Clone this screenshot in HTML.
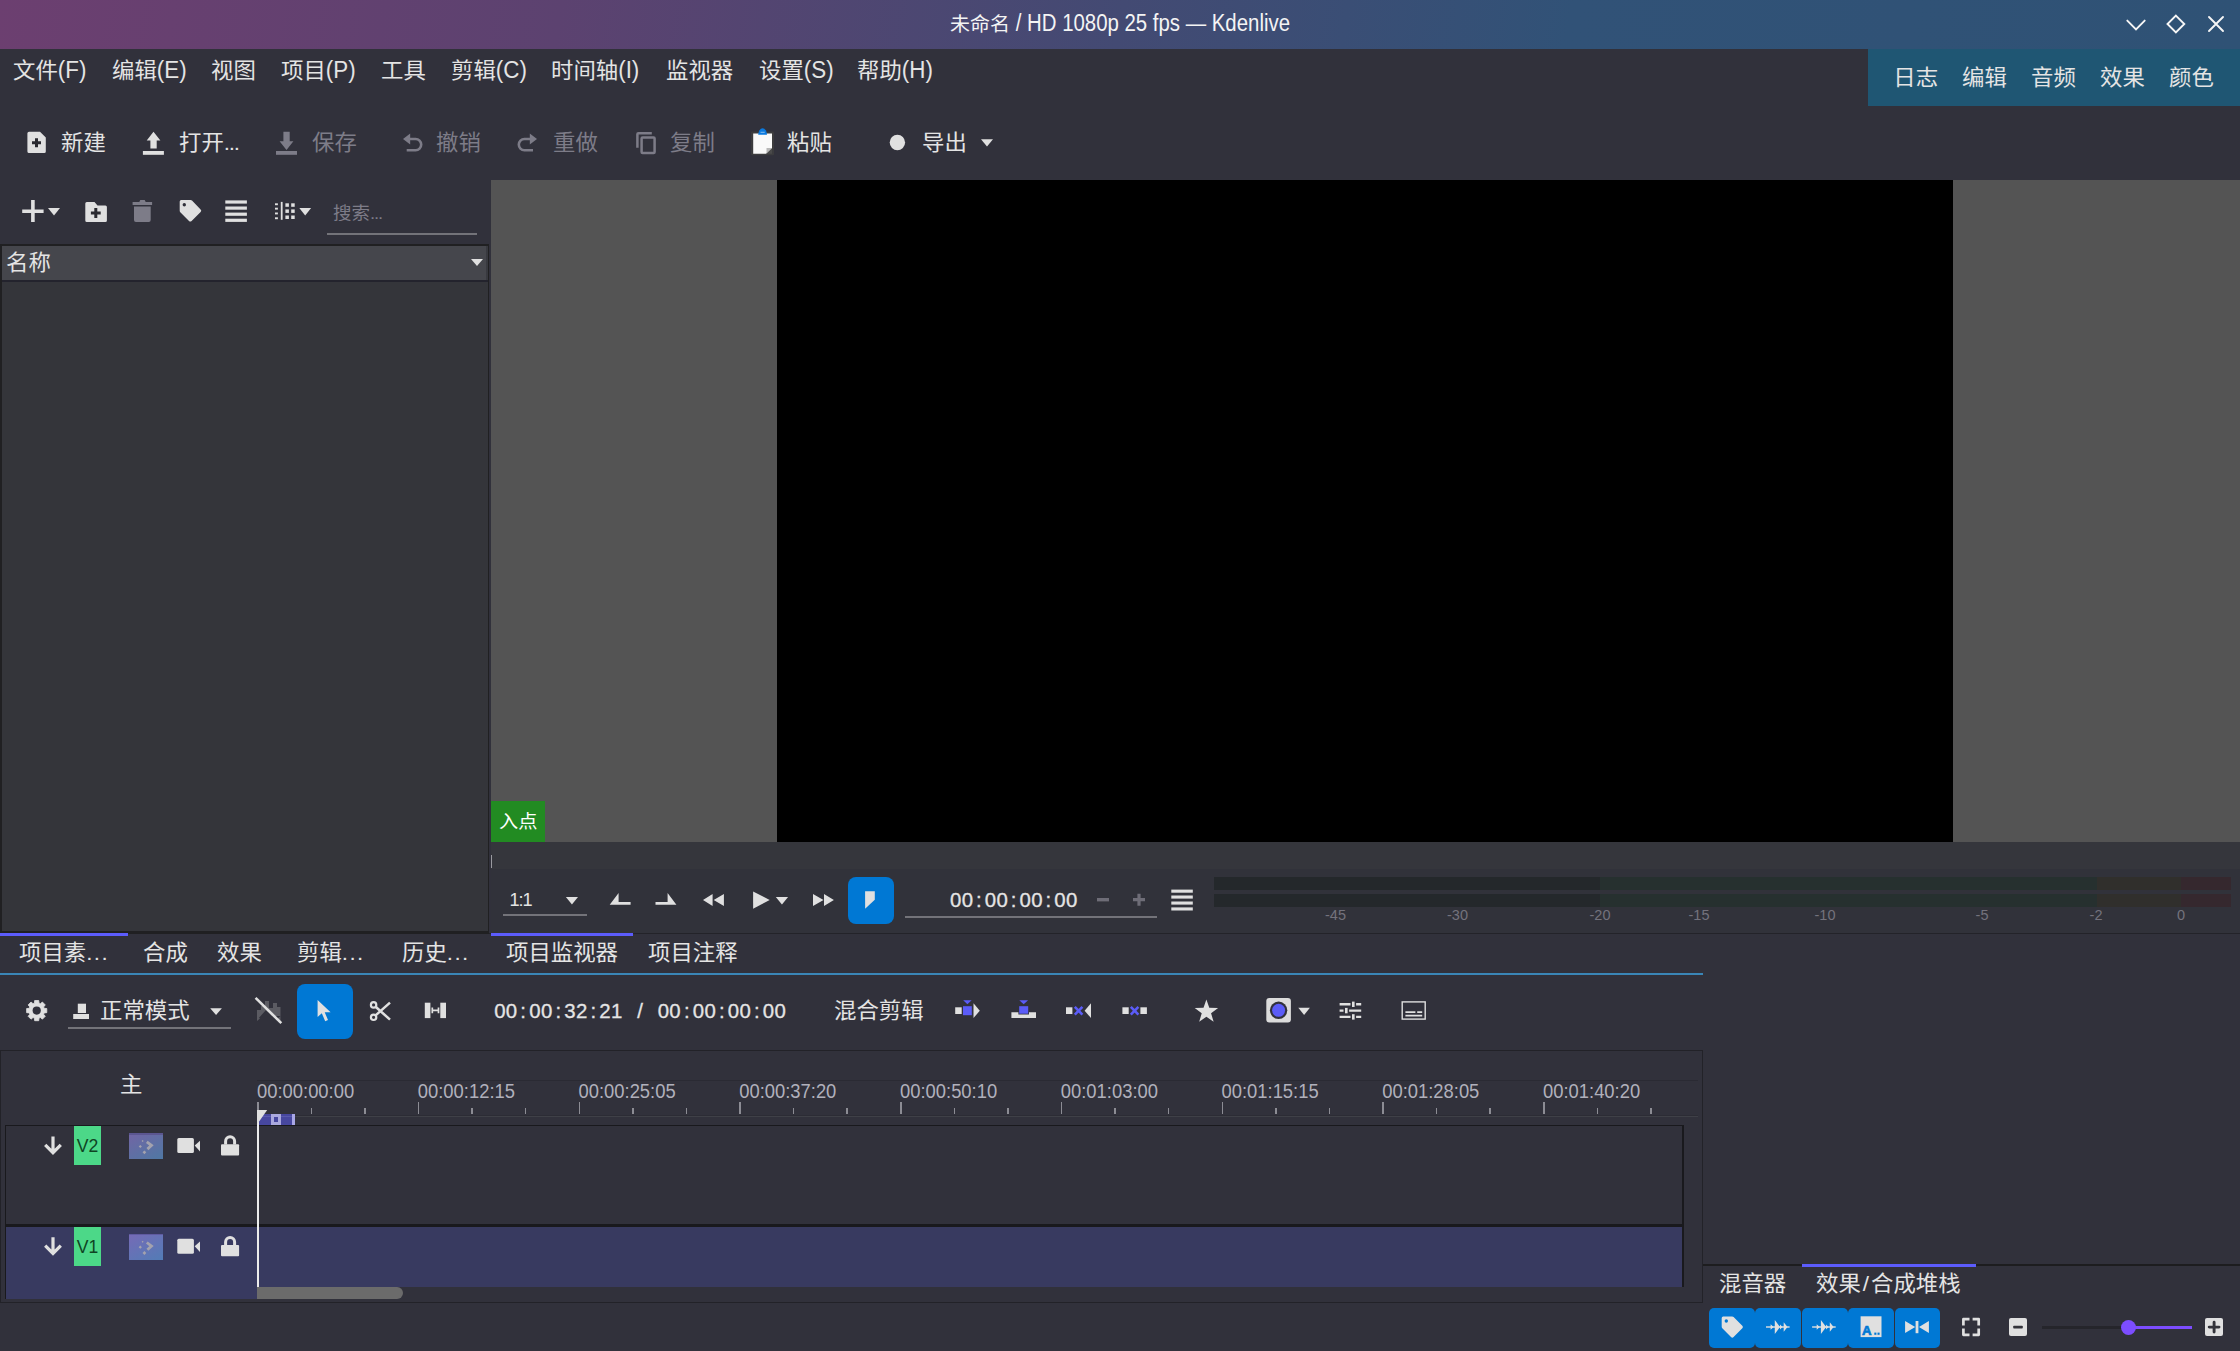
<!DOCTYPE html>
<html lang="zh-CN">
<head>
<meta charset="utf-8">
<title>未命名 / HD 1080p 25 fps — Kdenlive</title>
<style>
*{box-sizing:border-box;margin:0;padding:0}
html,body{width:2240px;height:1351px;overflow:hidden;background:#31313b}
body{position:relative;font-family:"Liberation Sans","Noto Sans CJK SC",sans-serif;font-size:22.4px;color:#e4e4e4;line-height:1}
.a{position:absolute}
.t{position:absolute;white-space:nowrap;line-height:30px;height:30px;transform:translateY(1.2px) scaleY(.94)}
.n{transform:none}
.rl{transform:scaleY(1.07)}
.d3{letter-spacing:-1.2px}
.d4{letter-spacing:1.4px}
.l{display:inline-block;transform:scaleY(1.17);transform-origin:50% 74%}
.dis{color:#7d7c88}
svg{position:absolute;overflow:visible}
</style>
</head>
<body>
<!-- TITLE BAR -->
<div class="a" id="titlebar" style="left:0;top:0;width:2240px;height:49px;background:linear-gradient(100deg,#6c3f70 0%,#5c4270 25%,#434a73 50%,#315277 70%,#2f5275 100%)"></div>
<div class="t" style="left:0;width:2240px;top:8px;text-align:center;color:#f4f4f4;font-size:20px">未命名<span style="font-size:20.4px;display:inline-block;white-space:pre;transform:scaleY(1.2);transform-origin:50% 73%"> / HD 1080p 25 fps — Kdenlive</span></div>
<!-- TITLE-BUTTONS -->
<!-- MENUBAR -->
<div class="t" style="left:13px;top:55px">文件<span class="l">(F)</span></div>
<div class="t" style="left:112px;top:55px">编辑<span class="l">(E)</span></div>
<div class="t" style="left:211px;top:55px">视图</div>
<div class="t" style="left:281px;top:55px">项目<span class="l">(P)</span></div>
<div class="t" style="left:381px;top:55px">工具</div>
<div class="t" style="left:451px;top:55px">剪辑<span class="l">(C)</span></div>
<div class="t" style="left:551px;top:55px">时间轴<span class="l">(I)</span></div>
<div class="t" style="left:666px;top:55px">监视器</div>
<div class="t" style="left:759px;top:55px">设置<span class="l">(S)</span></div>
<div class="t" style="left:857px;top:55px">帮助<span class="l">(H)</span></div>
<!-- WORKSPACES -->
<div class="a" style="left:1868px;top:49px;width:372px;height:57px;background:#1f5673"></div>
<div class="t" style="left:1893.3px;top:62px">日志</div>
<div class="t" style="left:1962px;top:62px">编辑</div>
<div class="t" style="left:2031px;top:62px">音频</div>
<div class="t" style="left:2100px;top:62px">效果</div>
<div class="t" style="left:2169px;top:62px">颜色</div>
<!-- MAIN-TOOLBAR -->
<div class="t" style="left:61px;top:127px">新建</div>
<div class="t" style="left:179px;top:127px">打开<span class="d3">...</span></div>
<div class="t dis" style="left:312px;top:127px">保存</div>
<div class="t dis" style="left:436px;top:127px">撤销</div>
<div class="t dis" style="left:553px;top:127px">重做</div>
<div class="t dis" style="left:670px;top:127px">复制</div>
<div class="t" style="left:787px;top:127px">粘贴</div>
<div class="t" style="left:922px;top:127px">导出</div>
<!-- BIN -->
<div class="a" style="left:0;top:244px;width:489px;height:689.5px;background:#202022"></div>
<div class="a" style="left:2px;top:246px;width:486px;height:685px;background:#34353a"></div>
<div class="a" style="left:2px;top:246px;width:486px;height:34px;background:#38393f"></div>
<div class="a" style="left:2px;top:246px;width:484px;height:34px;background:#45464c"></div>
<div class="a" style="left:2px;top:280px;width:486px;height:2px;background:#23232d"></div>
<div class="t" style="left:6px;top:247px">名称</div>
<div class="t" style="left:333px;top:197px;font-size:18.5px;color:#7d7c88">搜索<span class="d3">...</span></div>
<div class="a" style="left:327px;top:233px;width:150px;height:2px;background:#737379"></div>
<!-- MONITOR -->
<div class="a" style="left:491px;top:180px;width:1749px;height:662px;background:#545454"></div>
<div class="a" style="left:777px;top:180px;width:1176px;height:662px;background:#000"></div>
<!-- MONITOR-CONTROLS -->
<div class="a" style="left:491px;top:842px;width:1749px;height:91px;background:#31323a"></div>
<div class="a" style="left:491px;top:842px;width:1749px;height:27px;background:#35363c"></div>
<div class="a" style="left:491px;top:855px;width:1px;height:13px;background:#9a9aa0"></div>
<div class="a" style="left:491px;top:801px;width:54px;height:41px;background:#228b22"></div>
<div class="t" style="left:499px;top:806px;font-size:19.2px;color:#fff">入点</div>
<div class="t n" style="left:509.5px;top:884.5px;font-size:18.2px;letter-spacing:-1.1px">1:1</div>
<div class="a" style="left:503px;top:914px;width:84px;height:2px;background:#737379"></div>
<div class="a" style="left:848px;top:877px;width:46px;height:47px;border-radius:8px;background:#0078d4"></div>
<div class="a" style="left:905px;top:916px;width:252px;height:2px;background:#737379"></div>
<div class="a" style="left:1214px;top:877px;width:1017px;height:13px;background:linear-gradient(90deg,#24282b 0,#24282b 386px,#26302f 386px,#26302f 883px,#302f2c 883px,#302f2c 967px,#35282e 967px)"></div>
<div class="a" style="left:1214px;top:894px;width:1017px;height:13px;background:linear-gradient(90deg,#24282b 0,#24282b 386px,#26302f 386px,#26302f 883px,#302f2c 883px,#302f2c 967px,#35282e 967px)"></div>
<div class="t n" style="left:1305.5px;width:60px;text-align:center;top:899.5px;font-size:14.5px;color:#74737d">-45</div>
<div class="t n" style="left:1427.5px;width:60px;text-align:center;top:899.5px;font-size:14.5px;color:#74737d">-30</div>
<div class="t n" style="left:1570px;width:60px;text-align:center;top:899.5px;font-size:14.5px;color:#74737d">-20</div>
<div class="t n" style="left:1669px;width:60px;text-align:center;top:899.5px;font-size:14.5px;color:#74737d">-15</div>
<div class="t n" style="left:1795px;width:60px;text-align:center;top:899.5px;font-size:14.5px;color:#74737d">-10</div>
<div class="t n" style="left:1952px;width:60px;text-align:center;top:899.5px;font-size:14.5px;color:#74737d">-5</div>
<div class="t n" style="left:2066px;width:60px;text-align:center;top:899.5px;font-size:14.5px;color:#74737d">-2</div>
<div class="t n" style="left:2151px;width:60px;text-align:center;top:899.5px;font-size:14.5px;color:#74737d">0</div>
<!-- TABS -->
<div class="a" style="left:489px;top:933px;width:1751px;height:1px;background:#232329"></div>
<div class="a" style="left:0;top:933px;width:128px;height:3px;background:#5c5cfc"></div>
<div class="a" style="left:491px;top:933px;width:142px;height:3px;background:#5c5cfc"></div>
<div class="a" style="left:0;top:973.1px;width:1703px;height:1.6px;background:#3a86b7"></div>
<div class="t" style="left:19px;top:937px">项目素<span class="d4">...</span></div>
<div class="t" style="left:143px;top:937px">合成</div>
<div class="t" style="left:217px;top:937px">效果</div>
<div class="t" style="left:297px;top:937px">剪辑<span class="d4">...</span></div>
<div class="t" style="left:402px;top:937px">历史<span class="d4">...</span></div>
<div class="t" style="left:506px;top:937px">项目监视器</div>
<div class="t" style="left:648px;top:937px">项目注释</div>
<!-- TL-TOOLBAR -->
<div class="t" style="left:100px;top:994.8px">正常模式</div>
<div class="a" style="left:68px;top:1027px;width:163px;height:2px;background:#737379"></div>
<div class="a" style="left:297px;top:984px;width:56px;height:55px;border-radius:8px;background:#0078d4"></div>
<div class="t" style="left:834px;top:994.8px">混合剪辑</div>
<!-- TIMELINE -->
<div class="a" style="left:0;top:1050px;width:1703px;height:253px;background:#222228"></div>
<div class="a" style="left:1px;top:1051px;width:1701px;height:251px;background:#31313b"></div>
<div class="a" style="left:257px;top:1080px;width:1441px;height:1px;background:#2a2a33"></div>
<div class="a" style="left:257px;top:1114.5px;width:1441px;height:1px;background:#2c2c35"></div>
<div class="a" style="left:257px;top:1116px;width:1441px;height:1.2px;background:#3f4047"></div>
<div class="t" style="left:120px;top:1069px">主</div>
<!-- tracks -->
<div class="a" style="left:5px;top:1125px;width:1679px;height:174px;background:#19191d"></div>
<div class="a" style="left:6px;top:1126px;width:1676px;height:98px;background:#31313b"></div>
<div class="a" style="left:6px;top:1227px;width:1676px;height:72px;background:#383a60"></div>
<div class="a" style="left:257px;top:1287px;width:1427px;height:12px;background:#31313b"></div>
<div class="a" style="left:257px;top:1287px;width:146px;height:12px;background:#6b6b6b;border-radius:0 6px 6px 0"></div>
<div class="a" style="left:74px;top:1126px;width:27px;height:39px;background:#4cd888"></div>
<div class="a" style="left:74px;top:1227px;width:27px;height:39px;background:#4cd888"></div>
<div class="t n" style="left:74px;width:27px;text-align:center;top:1131px;font-size:17.6px;color:#0f4423">V2</div>
<div class="t n" style="left:74px;width:27px;text-align:center;top:1232px;font-size:17.6px;color:#0f4423">V1</div>
<div class="a" style="left:129px;top:1132.8px;width:34.1px;height:26.2px;background:linear-gradient(150deg,#7265a4,#4f78a4)"></div>
<div class="a" style="left:129px;top:1132.8px;width:34.1px;height:1.8px;background:#5b5690"></div>
<div class="a" style="left:129px;top:1233.5px;width:34.1px;height:26.2px;background:linear-gradient(150deg,#766ab6,#527cb6)"></div>
<div class="a" style="left:129px;top:1233.5px;width:34.1px;height:1.8px;background:#5f5aa0"></div>
<!-- zone -->
<div class="a" style="left:257px;top:1114px;width:38px;height:11px;background:#47479f"></div>
<div class="a" style="left:257px;top:1116px;width:38px;height:1px;background:#5a5aac"></div>
<div class="a" style="left:271px;top:1114px;width:10px;height:11px;background:#aaa8de"></div>
<div class="a" style="left:274.2px;top:1117px;width:3.7px;height:4.8px;background:#47479f"></div>
<div class="a" style="left:292px;top:1114px;width:3px;height:11px;background:#a9a7e6"></div>
<div class="a" style="left:257px;top:1110px;width:2px;height:177px;background:#ececec"></div>
<div class="t rl" style="left:257.0px;top:1077px;font-size:18.4px;color:#b0b0bb">00:00:00:00</div>
<div class="t rl" style="left:417.8px;top:1077px;font-size:18.4px;color:#b0b0bb">00:00:12:15</div>
<div class="t rl" style="left:578.5px;top:1077px;font-size:18.4px;color:#b0b0bb">00:00:25:05</div>
<div class="t rl" style="left:739.2px;top:1077px;font-size:18.4px;color:#b0b0bb">00:00:37:20</div>
<div class="t rl" style="left:900.0px;top:1077px;font-size:18.4px;color:#b0b0bb">00:00:50:10</div>
<div class="t rl" style="left:1060.8px;top:1077px;font-size:18.4px;color:#b0b0bb">00:01:03:00</div>
<div class="t rl" style="left:1221.5px;top:1077px;font-size:18.4px;color:#b0b0bb">00:01:15:15</div>
<div class="t rl" style="left:1382.2px;top:1077px;font-size:18.4px;color:#b0b0bb">00:01:28:05</div>
<div class="t rl" style="left:1543.0px;top:1077px;font-size:18.4px;color:#b0b0bb">00:01:40:20</div>
<div class="a" style="left:257.0px;top:1102px;width:1.5px;height:12px;background:#8c8c94"></div>
<div class="a" style="left:310.6px;top:1108px;width:1.5px;height:6px;background:#8c8c94"></div>
<div class="a" style="left:364.2px;top:1108px;width:1.5px;height:6px;background:#8c8c94"></div>
<div class="a" style="left:417.7px;top:1102px;width:1.5px;height:12px;background:#8c8c94"></div>
<div class="a" style="left:471.3px;top:1108px;width:1.5px;height:6px;background:#8c8c94"></div>
<div class="a" style="left:524.9px;top:1108px;width:1.5px;height:6px;background:#8c8c94"></div>
<div class="a" style="left:578.5px;top:1102px;width:1.5px;height:12px;background:#8c8c94"></div>
<div class="a" style="left:632.1px;top:1108px;width:1.5px;height:6px;background:#8c8c94"></div>
<div class="a" style="left:685.7px;top:1108px;width:1.5px;height:6px;background:#8c8c94"></div>
<div class="a" style="left:739.2px;top:1102px;width:1.5px;height:12px;background:#8c8c94"></div>
<div class="a" style="left:792.8px;top:1108px;width:1.5px;height:6px;background:#8c8c94"></div>
<div class="a" style="left:846.4px;top:1108px;width:1.5px;height:6px;background:#8c8c94"></div>
<div class="a" style="left:900.0px;top:1102px;width:1.5px;height:12px;background:#8c8c94"></div>
<div class="a" style="left:953.6px;top:1108px;width:1.5px;height:6px;background:#8c8c94"></div>
<div class="a" style="left:1007.2px;top:1108px;width:1.5px;height:6px;background:#8c8c94"></div>
<div class="a" style="left:1060.7px;top:1102px;width:1.5px;height:12px;background:#8c8c94"></div>
<div class="a" style="left:1114.3px;top:1108px;width:1.5px;height:6px;background:#8c8c94"></div>
<div class="a" style="left:1167.9px;top:1108px;width:1.5px;height:6px;background:#8c8c94"></div>
<div class="a" style="left:1221.5px;top:1102px;width:1.5px;height:12px;background:#8c8c94"></div>
<div class="a" style="left:1275.1px;top:1108px;width:1.5px;height:6px;background:#8c8c94"></div>
<div class="a" style="left:1328.7px;top:1108px;width:1.5px;height:6px;background:#8c8c94"></div>
<div class="a" style="left:1382.2px;top:1102px;width:1.5px;height:12px;background:#8c8c94"></div>
<div class="a" style="left:1435.8px;top:1108px;width:1.5px;height:6px;background:#8c8c94"></div>
<div class="a" style="left:1489.4px;top:1108px;width:1.5px;height:6px;background:#8c8c94"></div>
<div class="a" style="left:1543.0px;top:1102px;width:1.5px;height:12px;background:#8c8c94"></div>
<div class="a" style="left:1596.6px;top:1108px;width:1.5px;height:6px;background:#8c8c94"></div>
<div class="a" style="left:1650.2px;top:1108px;width:1.5px;height:6px;background:#8c8c94"></div>
<!-- RIGHT-BOTTOM -->
<div class="a" style="left:1703px;top:1264px;width:537px;height:2px;background:#1d1d1f"></div>
<div class="a" style="left:1802px;top:1264px;width:174px;height:3px;background:#5c5cfc"></div>
<div class="t" style="left:1719px;top:1268px">混音器</div>
<div class="t" style="left:1816px;top:1268px">效果<span style="letter-spacing:2px;margin-left:2px">/</span>合成堆栈</div>
<!-- STATUS -->
<div class="a" style="left:1709.10px;top:1308px;width:45.9px;height:40px;border-radius:5px;background:#0078d4"></div>
<div class="a" style="left:1755.45px;top:1308px;width:45.9px;height:40px;border-radius:5px;background:#0078d4"></div>
<div class="a" style="left:1801.80px;top:1308px;width:45.9px;height:40px;border-radius:5px;background:#0078d4"></div>
<div class="a" style="left:1848.15px;top:1308px;width:45.9px;height:40px;border-radius:5px;background:#0078d4"></div>
<div class="a" style="left:1894.50px;top:1308px;width:45.9px;height:40px;border-radius:5px;background:#0078d4"></div>
<div class="a" style="left:2009px;top:1318px;width:18px;height:18px;border-radius:2px;background:#e0e0e0"></div>
<div class="a" style="left:2205px;top:1318px;width:18px;height:18px;border-radius:2px;background:#e0e0e0"></div>
<div class="a" style="left:2042px;top:1326px;width:88px;height:3px;background:#25252b"></div>
<div class="a" style="left:2128px;top:1326px;width:64px;height:3px;background:#7c4dff"></div>
<div class="a" style="left:2120.5px;top:1319.5px;width:15px;height:15px;border-radius:50%;background:#7c4dff"></div>
<!-- ICONS -->
<svg id="icons" width="2240" height="1351" viewBox="0 0 2240 1351" style="left:0;top:0">
<g fill="none" stroke="#f6f6f6" stroke-width="1.9" stroke-linecap="round">
<path d="M2127.3 20.6L2136 29.3L2144.7 20.6"/>
<path d="M2175.9 15.6L2184.3 24L2175.9 32.4L2167.5 24Z"/>
<path d="M2209 17L2223 31M2223 17L2209 31"/>
</g>
<path d="M29 131.7H40L45.8 137.5V151.4a1.5 1.5 0 0 1-1.5 1.5H29a1.6 1.6 0 0 1-1.6-1.5V133.2a1.6 1.6 0 0 1 1.6-1.5Z" fill="#e0e0e0"/>
<path d="M32 142.7H41M36.5 138.2V147.2" stroke="#2a2a30" stroke-width="3" fill="none"/>
<path d="M153.5 131.7L160.4 140.4H156.7V148.5H150.4V140.4H146.7Z" fill="#e0e0e0"/><rect x="142.9" y="151" width="21" height="3.8" fill="#e0e0e0"/>
<path d="M283.4 131.7H289.7V141.3H293.4L286.5 150L279.6 141.3H283.4Z" fill="#7d7c88"/><rect x="276" y="151" width="21" height="3.8" fill="#7d7c88"/>
<path d="M403 139L410.2 133.5V144.5Z" fill="#7d7c88"/><path d="M409.5 139H415.6a5.6 5.6 0 0 1 0 11.2H406.7" fill="none" stroke="#7d7c88" stroke-width="2.6"/>
<path d="M537 139L529.8 133.5V144.5Z" fill="#7d7c88"/><path d="M530.5 139H524.4a5.6 5.6 0 0 0 0 11.2H533" fill="none" stroke="#7d7c88" stroke-width="2.6"/>
<path d="M651.8 133.2H638.4a1 1 0 0 0-1 1V147.8" fill="none" stroke="#7d7c88" stroke-width="2.5"/><rect x="641.6" y="137.6" width="13" height="15.4" rx="1" fill="none" stroke="#7d7c88" stroke-width="2.5"/>
<rect x="751" y="131.5" width="23" height="23.7" rx="1" fill="#3c3c3e"/>
<path d="M753.2 133.5H772V148L766 153.8H753.2Z" fill="#fafafa"/><path d="M772 148H766.5V153.8Z" fill="#b8b8b8"/><path d="M772 148.5V153.8H766.5Z" fill="#4a4a4a"/>
<path d="M758.2 134.8a4.4 6.5 0 0 1 8.8 0Z" fill="#0a7ae0"/><rect x="760.5" y="131.8" width="4.2" height="0.9" fill="#9cc8f0"/>
<circle cx="897.4" cy="142.5" r="7.7" fill="#e0e0e0"/>
<path d="M981 139.2H993L987.0 146.6Z" fill="#e0e0e0"/>
<path d="M22.2 211.2H43.6M32.9 200V222" stroke="#e0e0e0" stroke-width="3.6" fill="none"/>
<path d="M48 208H60L54.0 215.4Z" fill="#e0e0e0"/>
<path d="M86.8 202H94.5L97.5 205.4H105.4a1.5 1.5 0 0 1 1.5 1.5V220.4a1.5 1.5 0 0 1-1.5 1.5H86.8a1.5 1.5 0 0 1-1.5-1.5V203.5a1.5 1.5 0 0 1 1.5-1.5Z" fill="#e0e0e0"/>
<path d="M90.9 213H100.7M95.8 208.1V217.9" stroke="#2a2a30" stroke-width="3" fill="none"/>
<path d="M139.3 201.9L140.3 200H144.7L145.7 201.9H152.1V205H132.6V201.9Z" fill="#7d7c88"/><path d="M134 206.4H150.7V220a1.9 1.9 0 0 1-1.9 1.9H135.9A1.9 1.9 0 0 1 134 220Z" fill="#7d7c88"/>
<path d="M181.2 200H190.6a2 2 0 0 1 1.4.6L200.6 209.4a1.8 1.8 0 0 1 0 2.6L191.6 220.9a1.8 1.8 0 0 1-2.6 0L180.3 212.2a2 2 0 0 1-.6-1.4V201.5a1.5 1.5 0 0 1 1.5-1.5Z" fill="#e0e0e0"/><circle cx="184.3" cy="204.8" r="1.7" fill="#31313b"/>
<rect x="225.3" y="200.4" width="21.6" height="3.2" fill="#e0e0e0"/>
<rect x="225.3" y="206.5" width="21.6" height="3.2" fill="#e0e0e0"/>
<rect x="225.3" y="212.6" width="21.6" height="3.2" fill="#e0e0e0"/>
<rect x="225.3" y="218.7" width="21.6" height="3.2" fill="#e0e0e0"/>
<rect x="275" y="203.3" width="2.9" height="1.9" fill="#e0e0e0"/>
<rect x="275" y="207.7" width="2.9" height="1.9" fill="#e0e0e0"/>
<rect x="275" y="212.5" width="2.9" height="1.9" fill="#e0e0e0"/>
<rect x="275" y="217.3" width="2.9" height="1.9" fill="#e0e0e0"/>
<rect x="280.8" y="201.9" width="1.8" height="17.9" fill="#e0e0e0"/>
<rect x="285.4" y="203.3" width="3.5" height="3.5" fill="#e0e0e0"/>
<rect x="285.4" y="209.4" width="3.5" height="3.5" fill="#e0e0e0"/>
<rect x="285.4" y="215.5" width="3.5" height="3.5" fill="#e0e0e0"/>
<rect x="291.2" y="203.3" width="3.5" height="3.5" fill="#e0e0e0"/>
<rect x="291.2" y="209.4" width="3.5" height="3.5" fill="#e0e0e0"/>
<rect x="291.2" y="215.5" width="3.5" height="3.5" fill="#e0e0e0"/>
<path d="M299.3 208H311.1L305.20000000000005 215.4Z" fill="#e0e0e0"/>
<path d="M471 259H483L477.0 266Z" fill="#e0e0e0"/>
<path d="M565.9 897H578L571.95 904.4Z" fill="#e0e0e0"/>
<path d="M609.7 904.7L618.6 893V902H630.6V904.7Z" fill="#e0e0e0"/>
<path d="M676.4 904.7L667.6 893V902H655.5V904.7Z" fill="#e0e0e0"/>
<path d="M703 900L712.6 893.9V906Z M713.7 900L723.9 893.9V906Z" fill="#e0e0e0"/>
<path d="M753.1 891.5L769.7 900L753.1 908.7Z" fill="#e0e0e0"/>
<path d="M775.8 897H788.1L781.95 904.4Z" fill="#e0e0e0"/>
<path d="M823.5 900L813 893.9V906Z M833.9 900L824 893.9V906Z" fill="#e0e0e0"/>
<path d="M865.1 891.3H874.8V899.8L865.1 908.8Z" fill="#e0e0e0"/>
<rect x="1097" y="898" width="12" height="3.4" fill="#6e6d77"/>
<path d="M1133 899.7H1145M1139 893.8V905.7" stroke="#6e6d77" stroke-width="3.2" fill="none"/>
<rect x="1171.3" y="889.6" width="21.5" height="3.1" fill="#e0e0e0"/>
<rect x="1171.3" y="895.5" width="21.5" height="3.1" fill="#e0e0e0"/>
<rect x="1171.3" y="901.5" width="21.5" height="3.1" fill="#e0e0e0"/>
<rect x="1171.3" y="907.4" width="21.5" height="3.1" fill="#e0e0e0"/>
<path d="M44.15 1008.29L46.79 1008.55L46.79 1012.65L44.15 1012.91L43.60 1014.24L45.28 1016.29L42.39 1019.18L40.34 1017.50L39.01 1018.05L38.75 1020.69L34.65 1020.69L34.39 1018.05L33.06 1017.50L31.01 1019.18L28.12 1016.29L29.80 1014.24L29.25 1012.91L26.61 1012.65L26.61 1008.55L29.25 1008.29L29.80 1006.96L28.12 1004.91L31.01 1002.02L33.06 1003.70L34.39 1003.15L34.65 1000.51L38.75 1000.51L39.01 1003.15L40.34 1003.70L42.39 1002.02L45.28 1004.91L43.60 1006.96Z" fill="#e0e0e0" stroke="#e0e0e0" stroke-width=".8" stroke-linejoin="round"/><circle cx="36.7" cy="1010.6" r="4.1" fill="#31313b"/>
<rect x="77.8" y="1003.7" width="8.2" height="9.3" fill="#e0e0e0"/><rect x="73.2" y="1014" width="15.8" height="5" fill="#e0e0e0"/>
<path d="M210.2 1008.3H221.9L216.05 1015Z" fill="#e0e0e0"/>
<path d="M257 1020V1010H261V1006H265V1001H269V1008H273V1003H277V1007H280.5V1016H272L266 1010L257 1020Z" fill="#5b5b62"/>
<path d="M257 1016L260 1018.5L257 1021Z M280.5 1016L277.5 1018.5L280.5 1021Z" fill="#5b5b62"/>
<path d="M255.6 997.8L281.3 1023.2" stroke="#e0e0e0" stroke-width="2.6" fill="none"/>
<path d="M317.6 1000V1017L321.8 1013.2L325.2 1021.2L328 1020L324.7 1012.2H330.6Z" fill="#e0e0e0"/>
<g fill="none" stroke="#e0e0e0" stroke-width="2.2"><circle cx="373.6" cy="1004.9" r="2.7"/><circle cx="373.6" cy="1017.3" r="2.7"/></g>
<path d="M375.6 1006.8L390 1019.6M375.6 1015.4L390 1002.6" stroke="#e0e0e0" stroke-width="2.5" fill="none"/>
<rect x="424.8" y="1002.7" width="5.6" height="15.4" fill="#e0e0e0"/><rect x="440.3" y="1002.7" width="5.7" height="15.4" fill="#e0e0e0"/>
<path d="M431.5 1010.4H439.3M432.3 1007.6V1013.2M438.5 1007.6V1013.2" stroke="#e0e0e0" stroke-width="1.7" fill="none"/>
<rect x="955.2" y="1007.3" width="6.5" height="6.7" fill="#e0e0e0"/><rect x="963" y="1006.2" width="8.8" height="9" fill="#5b5cf8"/><path d="M963.2 1000.2H971.6L967.4 1004.2Z" fill="#5b5cf8"/><path d="M973.5 1003.3L979.8 1010.7L973.5 1018Z" fill="#e0e0e0"/>
<rect x="1019.2" y="1006.2" width="9" height="7.5" fill="#5b5cf8"/><path d="M1019.3 1000.2H1028.1L1023.7 1004.2Z" fill="#5b5cf8"/><path d="M1011.4 1012.2H1018.4V1014.6H1029V1012.2H1036V1018H1011.4Z" fill="#e0e0e0"/>
<rect x="1066" y="1007.3" width="6.4" height="6.7" fill="#e0e0e0"/><path d="M1074.8 1006.8L1082.4 1014.6M1082.4 1006.8L1074.8 1014.6" stroke="#5b5cf8" stroke-width="2.6" fill="none"/><path d="M1091 1003.3L1084.6 1010.7L1091 1018Z" fill="#e0e0e0"/>
<rect x="1122.4" y="1007.3" width="6.3" height="6.7" fill="#e0e0e0"/><path d="M1130.8 1006.8L1138.4 1014.6M1138.4 1006.8L1130.8 1014.6" stroke="#5b5cf8" stroke-width="2.6" fill="none"/><rect x="1140.4" y="1007.3" width="6.5" height="6.7" fill="#e0e0e0"/>
<path d="M1206.40 999.50L1209.28 1007.84L1218.10 1008.00L1211.06 1013.31L1213.63 1021.75L1206.40 1016.70L1199.17 1021.75L1201.74 1013.31L1194.70 1008.00L1203.52 1007.84Z" fill="#e0e0e0"/>
<rect x="1266.3" y="998" width="24.6" height="24.6" rx="3" fill="#dcdcdc"/><circle cx="1278.6" cy="1010.3" r="8.7" fill="#31313b"/><circle cx="1278.6" cy="1010.3" r="6.5" fill="#5b5cf8"/>
<path d="M1298.3 1007.8H1309.9L1304.1 1015Z" fill="#e0e0e0"/>
<path d="M1339.6 1004.3H1361.2M1339.6 1010.6H1361.2M1339.6 1016.9H1361.2" stroke="#e0e0e0" stroke-width="2.4" fill="none"/>
<rect x="1350.5" y="1001.6" width="5.6" height="5.4" fill="#31313b"/><rect x="1352" y="1001.6" width="2.6" height="5.4" fill="#e0e0e0"/>
<rect x="1343.5" y="1007.9" width="5.6" height="5.4" fill="#31313b"/><rect x="1345" y="1007.9" width="2.6" height="5.4" fill="#e0e0e0"/>
<rect x="1350.5" y="1014.2" width="5.6" height="5.4" fill="#31313b"/><rect x="1352" y="1014.2" width="2.6" height="5.4" fill="#e0e0e0"/>
<rect x="1402.2" y="1001.9" width="23" height="17.2" fill="none" stroke="#e0e0e0" stroke-width="1.4"/>
<path d="M1405.4 1012.2H1415.4M1417.2 1012.2H1422.2M1405.4 1015.6H1422.2" stroke="#e0e0e0" stroke-width="1.7" fill="none"/>
<path d="M53 1136.6V1152.5M45.2 1144.9L53 1152.7L60.8 1144.9" stroke="#e0e0e0" stroke-width="3.2" fill="none"/>
<path d="M146.8 1141.8L151.5 1145.4L147.4 1149.1" stroke="#a3a2ae" stroke-width="2.8" fill="none"/><path d="M140.3 1144.9L141.9 1146.5L140.3 1148.1L138.70000000000002 1146.5ZM144.4 1150.3999999999999L146.3 1152.3L144.4 1154.2L142.5 1152.3ZM142.6 1140.0L143.6 1141.0L142.6 1142.0L141.6 1141.0Z" fill="#a3a2ae"/>
<rect x="177.3" y="1138.0" width="16.6" height="15" rx="1.5" fill="#e0e0e0"/><path d="M194.7 1145.5L200 1140.7V1151.4Z" fill="#e0e0e0"/>
<rect x="221" y="1144.3" width="18.1" height="11.3" rx="1" fill="#e0e0e0"/><path d="M225.6 1144.5V1141.2a4.5 4.5 0 0 1 9 0V1144.5" stroke="#e0e0e0" stroke-width="3" fill="none"/>
<path d="M53 1237.3V1253.2M45.2 1245.6000000000001L53 1253.4L60.8 1245.6000000000001" stroke="#e0e0e0" stroke-width="3.2" fill="none"/>
<path d="M146.8 1242.5L151.5 1246.1000000000001L147.4 1249.8" stroke="#a3a2ae" stroke-width="2.8" fill="none"/><path d="M140.3 1245.6000000000001L141.9 1247.2L140.3 1248.8L138.70000000000002 1247.2ZM144.4 1251.1L146.3 1253.0L144.4 1254.9L142.5 1253.0ZM142.6 1240.7L143.6 1241.7L142.6 1242.7L141.6 1241.7Z" fill="#a3a2ae"/>
<rect x="177.3" y="1238.7" width="16.6" height="15" rx="1.5" fill="#e0e0e0"/><path d="M194.7 1246.2L200 1241.4V1252.1000000000001Z" fill="#e0e0e0"/>
<rect x="221" y="1245.0" width="18.1" height="11.3" rx="1" fill="#e0e0e0"/><path d="M225.6 1245.2V1241.9a4.5 4.5 0 0 1 9 0V1245.2" stroke="#e0e0e0" stroke-width="3" fill="none"/>
<path d="M257 1110H267.2L257 1124.6Z" fill="#e0e0e0"/>
<path d="M1723.2 1316.4H1732.2a2 2 0 0 1 1.4.6L1742.3 1325.7a1.8 1.8 0 0 1 0 2.6L1733.6 1337a1.8 1.8 0 0 1-2.6 0L1722.3 1328.2a2 2 0 0 1-.6-1.4V1317.9a1.5 1.5 0 0 1 1.5-1.5Z" fill="#e0e0e0"/><circle cx="1726.3" cy="1321" r="1.7" fill="#0078d4"/>
<path d="M1766.0 1327H1789.6" stroke="#e0e0e0" stroke-width="1.4" fill="none"/><path d="M1770.6 1324.2L1773.6 1327L1770.6 1329.8Z M1774.8 1320L1780.0 1327L1774.8 1334Z M1780.0 1324.4L1782.6 1327L1780.0 1329.6Z M1783.7 1322.2L1787.5 1327L1783.7 1331.8Z" fill="#e0e0e0"/>
<path d="M1812.1 1327H1835.7" stroke="#e0e0e0" stroke-width="1.4" fill="none"/><path d="M1816.7 1324.2L1819.7 1327L1816.7 1329.8Z M1820.9 1320L1826.1 1327L1820.9 1334Z M1826.1 1324.4L1828.7 1327L1826.1 1329.6Z M1829.8 1322.2L1833.6 1327L1829.8 1331.8Z" fill="#e0e0e0"/>
<rect x="1860.6" y="1316.3" width="20.9" height="20.8" fill="#e0e0e0"/>
<text x="1862" y="1334.8" font-family="Liberation Sans,sans-serif" font-weight="bold" font-size="13.2" fill="#0078d4" stroke="#0078d4" stroke-width=".7">A</text><rect x="1874.3" y="1332.6" width="2.1" height="2.2" fill="#0078d4"/><rect x="1877.5" y="1332.6" width="2.1" height="2.2" fill="#0078d4"/>
<path d="M1905.1 1321.1L1915.2 1327.1L1905.1 1333.1Z M1928.9 1321.1L1919 1327.1L1928.9 1333.1Z" fill="#e0e0e0"/><rect x="1915.6" y="1321" width="2.8" height="12.2" fill="#e0e0e0"/>
<path d="M1963.4 1325.4V1319.2H1969.5M1972.6 1319.2H1978.7V1325.4M1978.7 1328.6V1334.8H1972.6M1969.5 1334.8H1963.4V1328.6" stroke="#e0e0e0" stroke-width="2.7" stroke-linejoin="round" fill="none"/>
<rect x="2013.2" y="1325.7" width="9.6" height="2.9" rx=".8" fill="#33333a"/>
<path d="M2209.2 1327.1H2219M2214.1 1322.2V1332" stroke="#33333a" stroke-width="2.9" stroke-linecap="round" fill="none"/>
<text x="955.79 967.37 978.95 990.53 1002.11 1013.69 1025.27 1036.85 1048.43 1060.01 1071.59" y="907.07" text-anchor="middle" font-family="Liberation Sans,sans-serif" font-size="20.4" fill="#e4e4e4" stroke="#e4e4e4" stroke-width=".3" xml:space="preserve">00:00:00:00</text>
<text x="499.84 511.52 523.20 534.88 546.56 558.24 569.92 581.60 593.28 604.96 616.64 628.32 640.00 651.68 663.36 675.04 686.72 698.40 710.08 721.76 733.44 745.12 756.80 768.48 780.16" y="1018.07" text-anchor="middle" font-family="Liberation Sans,sans-serif" font-size="20.4" fill="#e4e4e4" stroke="#e4e4e4" stroke-width=".3" xml:space="preserve">00:00:32:21 / 00:00:00:00</text>
</svg>
<!-- /ICONS -->
</body>
</html>
